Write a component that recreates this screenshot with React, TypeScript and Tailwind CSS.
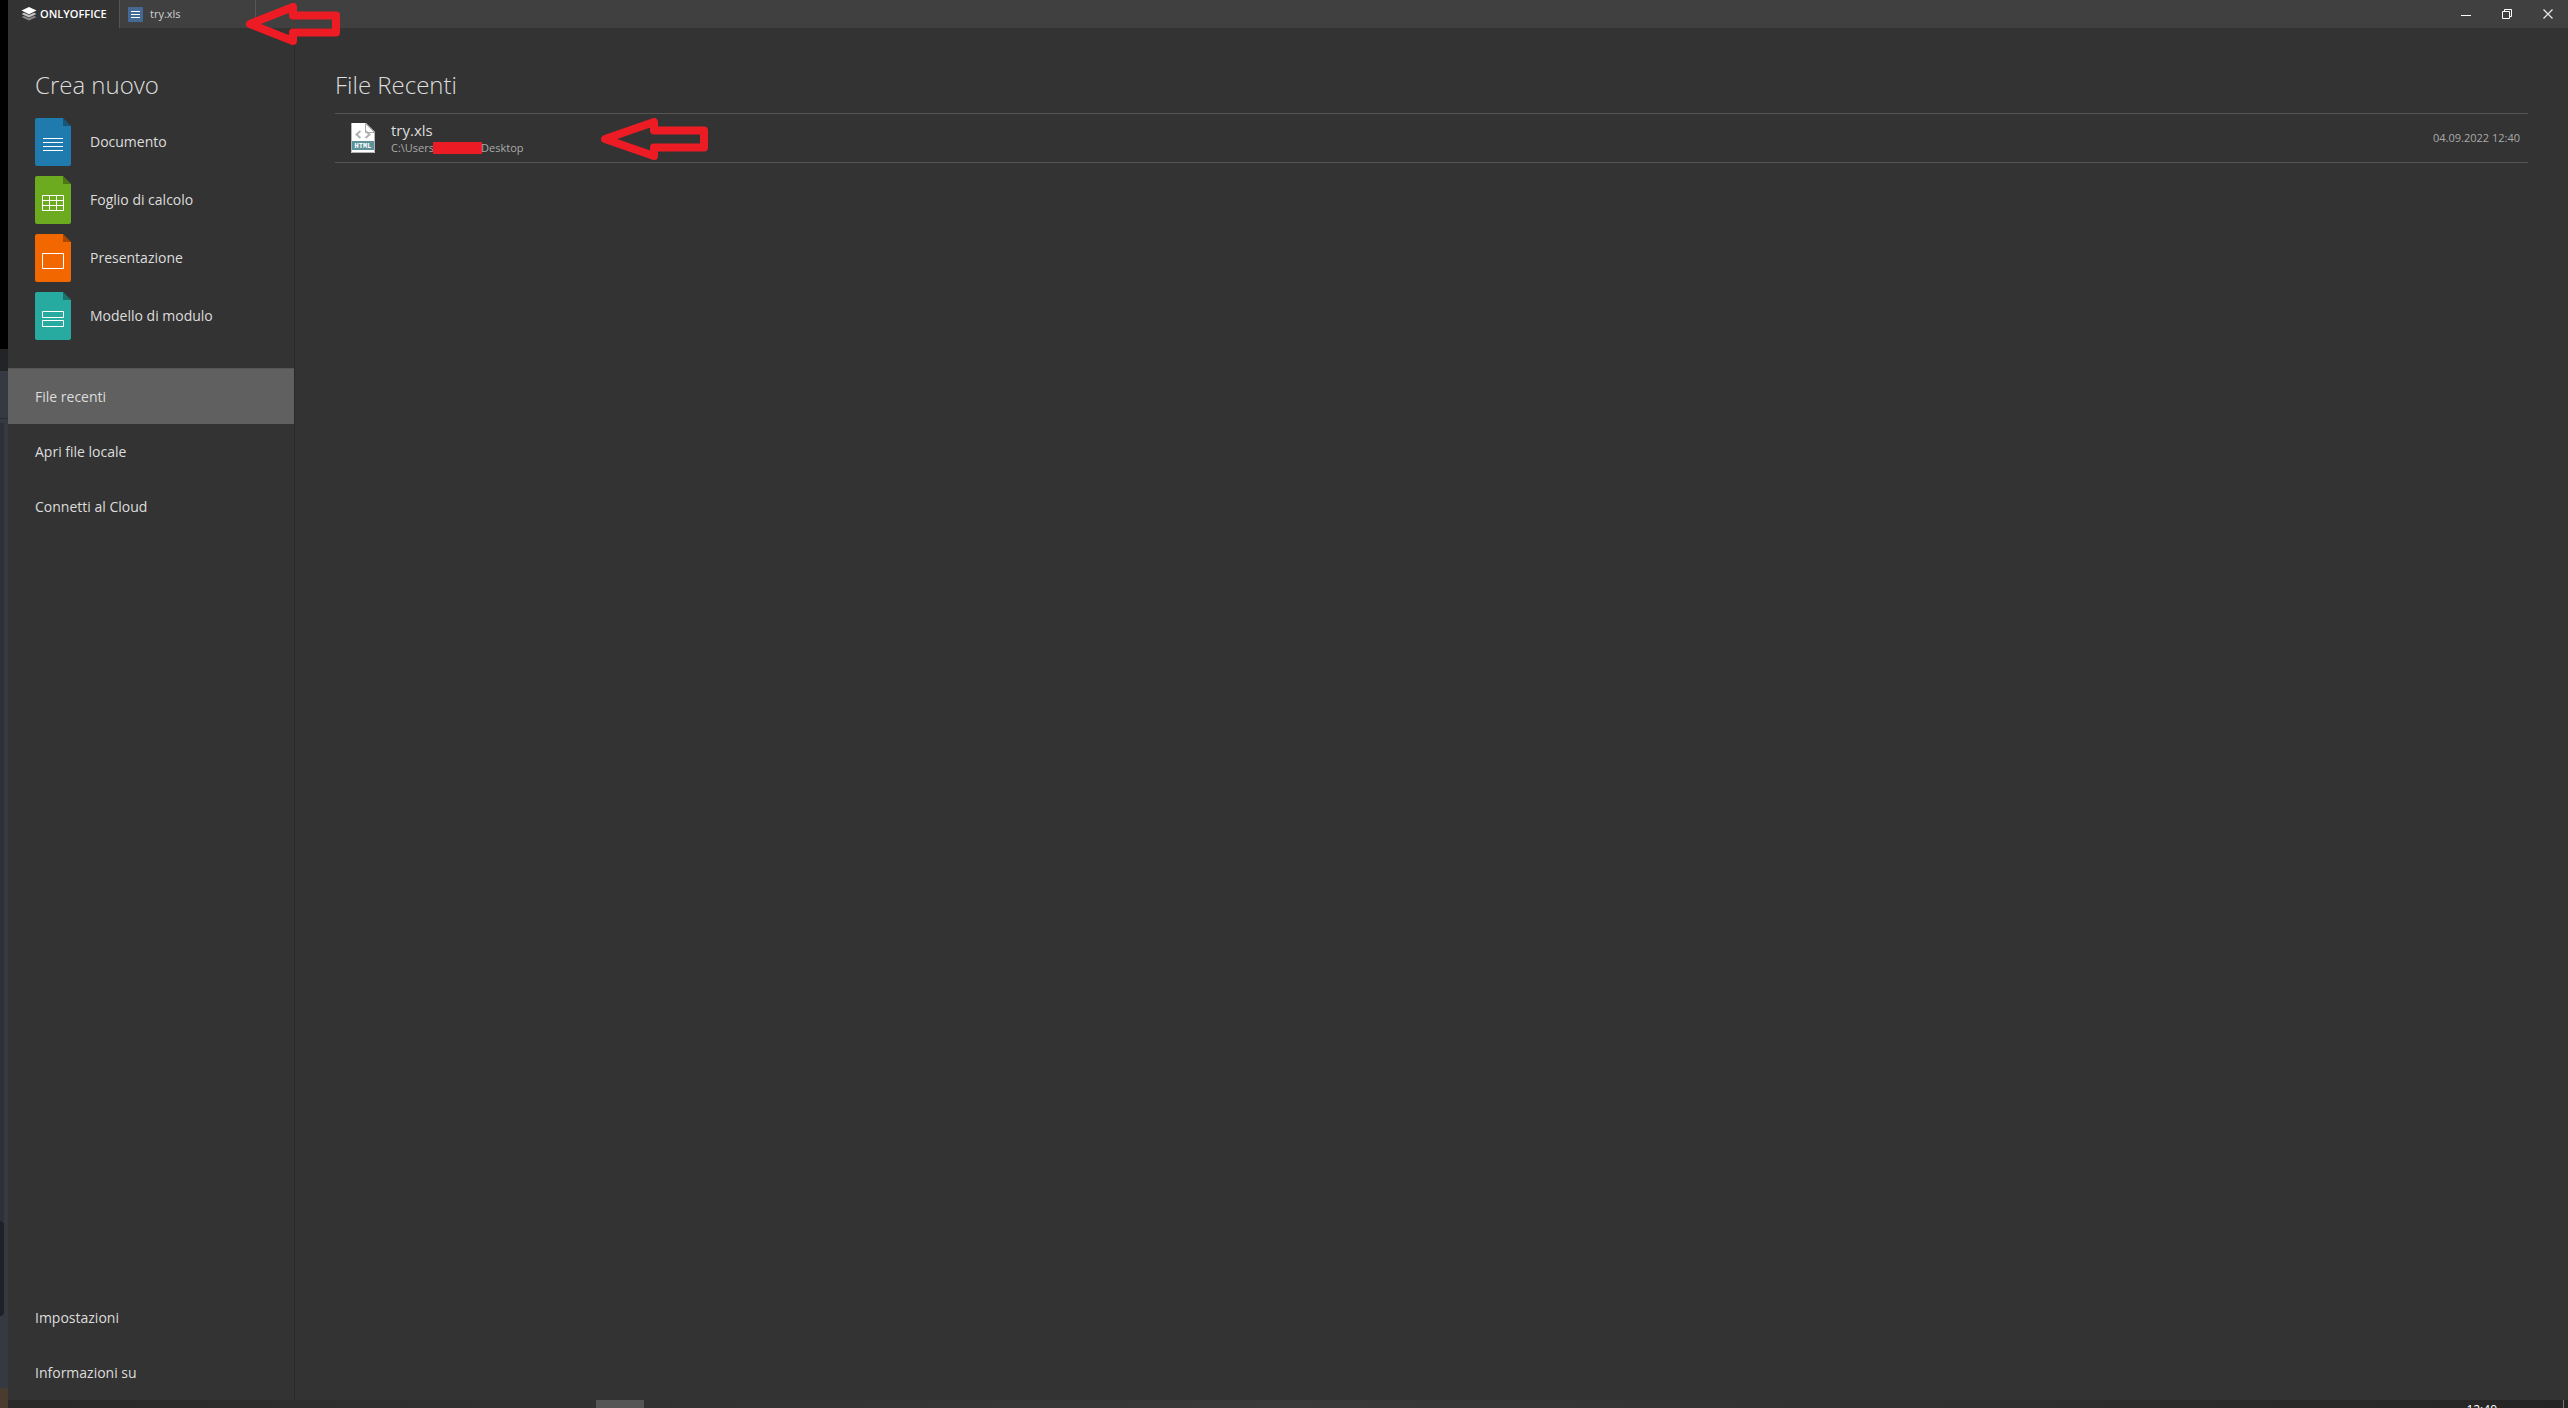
import type { ReactNode } from 'react';

type CreateItem = {
  label: string;
  color: string;
  glyph: ReactNode;
};

const createItems: CreateItem[] = [
  {
    label: 'Documento',
    color: '#1f7bae',
    glyph: <path d="M8 20.5h20M8 24.5h20M8 28.5h20M8 32.5h20" />,
  },
  {
    label: 'Foglio di calcolo',
    color: '#6cab1f',
    glyph: (
      <path d="M7.5 19.5h21v15h-21zM7.5 24.5h21M7.5 29.5h21M14.5 19.5v15M21.5 19.5v15" />
    ),
  },
  {
    label: 'Presentazione',
    color: '#f36700',
    glyph: <path d="M7.5 19.5h21v15h-21z" />,
  },
  {
    label: 'Modello di modulo',
    color: '#27aaa0',
    glyph: <path d="M7.5 19.5h21v6h-21zM7.5 28.5h21v6h-21z" />,
  },
];

function Logo() {
  return (
    <svg width="16" height="14" viewBox="0 0 16 14" aria-hidden="true">
      <path d="M0.5 10 3 8.9l5 2.3 5-2.3 2.5 1.1L8 13.6z" fill="#8a8a8a" />
      <path d="M0.5 6.9 3 5.8l5 2.3 5-2.3 2.5 1.1L8 10.4z" fill="#c4c4c4" />
      <path d="M8 0l7.5 3.6L8 7.2 0.5 3.6z" fill="#fff" />
    </svg>
  );
}

function FileIcon({ color, glyph }: { color: string; glyph: ReactNode }) {
  return (
    <svg width="36" height="48" viewBox="0 0 36 48" aria-hidden="true">
      <path d="M2 0h26l8 8v38a2 2 0 0 1-2 2H2a2 2 0 0 1-2-2V2a2 2 0 0 1 2-2z" fill={color} />
      <path d="M28 0l8 8h-8z" fill="#000" fillOpacity="0.3" />
      <g fill="none" stroke="#fff">
        {glyph}
      </g>
    </svg>
  );
}

function HtmlIcon() {
  return (
    <svg width="24" height="30" viewBox="0 0 24 30" aria-hidden="true">
      <path d="M0 0h15l9 9v21H0z" fill="#fff" />
      <path d="M0.5 0v29.5h23V9" fill="none" stroke="#b4b4b4" />
      <path d="M14.5 0.5v9h9z" fill="#fff" stroke="#a8a8a8" />
      <path d="M9.5 8 5.5 11.5l4 3.500M14.5 8l4 3.500-4 3.500" fill="none" stroke="#b0b0b0" strokeWidth="2" />
      <rect x="1" y="18" width="22" height="9" fill="#5d929b" />
      <text
        x="12"
        y="25"
        fill="#fff"
        fontSize="7"
        fontWeight="700"
        textAnchor="middle"
        fontFamily="'Liberation Mono', monospace"
      >
        HTML
      </text>
    </svg>
  );
}

type ArrowProps = {
  width: number;
  head: number;
  className: string;
};

function Arrow({ width, head, className }: ArrowProps) {
  return (
    <svg
      width={width}
      height="42"
      viewBox={`0 0 ${width} 42`}
      className={`pointer-events-none absolute ${className}`}
      aria-hidden="true"
    >
      <path
        d={`M4 21 ${head} 4v8.5H${width - 4}v17H${head}V38z`}
        fill="none"
        stroke="#ed1c24"
        strokeWidth="8"
        strokeLinejoin="round"
      />
    </svg>
  );
}

function TitleBar() {
  return (
    <header className="flex h-7 items-stretch bg-[#404040]">
      <button className="flex w-[111px] items-center gap-[3px] bg-[#333] pl-[13px] text-[11px] font-semibold text-white">
        <Logo />
        ONLYOFFICE
      </button>
      <div className="relative flex w-[137px] border-x border-[#555]">
        <button className="flex flex-1 items-center gap-[7px] pl-2 text-[11px] text-[#d0d0d0]">
          <svg width="15" height="15" viewBox="0 0 15 15" aria-hidden="true">
            <rect width="15" height="15" rx="1" fill="#446995" />
            <path d="M3 4.5h9M3 7.5h9M3 10.5h9" stroke="#fff" />
          </svg>
          try.xls
        </button>
        <Arrow width={94} head={47} className="top-[3px] left-[126px]" />
      </div>
      <div className="ml-auto flex">
        <button aria-label="Riduci a icona" className="flex w-[41px] items-center justify-center">
          <svg width="10" height="10" viewBox="0 0 10 10">
            <path d="M0 6.5h10" stroke="#fff" />
          </svg>
        </button>
        <button aria-label="Ripristina" className="flex w-[41px] items-center justify-center">
          <svg width="10" height="10" viewBox="0 0 10 10" fill="none" stroke="#fff">
            <path d="M0.5 2.5h7v7h-7zM2.5 2.5v-2h7v7h-2" />
          </svg>
        </button>
        <button aria-label="Chiudi" className="flex w-[41px] items-center justify-center">
          <svg width="10" height="10" viewBox="0 0 10 10">
            <path d="M0.5 0.5l9 9M9.5 0.5l-9 9" stroke="#e4e4e4" strokeWidth="1.3" />
          </svg>
        </button>
      </div>
    </header>
  );
}

function NavItem({ label, active = false }: { label: string; active?: boolean }) {
  return (
    <button
      className={`flex h-[55px] w-full items-center pl-[27px] text-left ${active ? 'bg-[#606060]' : ''}`}
    >
      {label}
    </button>
  );
}

function Sidebar() {
  return (
    <aside className="flex w-[287px] shrink-0 flex-col border-r border-[#292929] pt-[39px] text-sm text-[#ddd]">
      <h2 className="pl-[27px] text-2xl leading-9 font-light">Crea nuovo</h2>
      <div className="flex flex-col gap-2.5 pt-[15px] pl-[27px]">
        {createItems.map((item) => (
          <button key={item.label} className="flex items-center gap-[19px] text-left">
            <FileIcon color={item.color} glyph={item.glyph} />
            {item.label}
          </button>
        ))}
      </div>
      <nav className="mt-7 border-t border-[#555]">
        <NavItem label="File recenti" active />
        <NavItem label="Apri file locale" />
        <NavItem label="Connetti al Cloud" />
      </nav>
      <div className="mt-auto">
        <NavItem label="Impostazioni" />
        <NavItem label="Informazioni su" />
      </div>
    </aside>
  );
}

function RecentFiles() {
  return (
    <main className="min-w-0 flex-1 px-10 pt-[39px] text-[#ddd]">
      <h2 className="text-2xl leading-9 font-light">File Recenti</h2>
      <div className="relative mt-2.5">
        <button className="flex h-[50px] w-full items-center border-y border-[#555] pr-2 pl-4 text-left">
          <HtmlIcon />
          <span className="ml-4 flex flex-col">
            <span className="text-[15px] leading-5">try.xls</span>
            <span className="flex items-center text-[11px] leading-4 text-[#aaa]">
              C:\Users
              <span className="-mx-px h-3 w-[49px] bg-[#ed1c24]" />
              Desktop
            </span>
          </span>
          <time className="ml-auto text-[11px] text-[#aaa]">04.09.2022 12:40</time>
        </button>
        <Arrow width={107} head={53} className="top-[5px] left-[266px]" />
      </div>
    </main>
  );
}

// Strip of the desktop visible to the left of the window
function DesktopEdge() {
  return (
    <div className="flex w-2 shrink-0 flex-col bg-[#353941]">
      <div className="h-[349px] bg-black" />
      <div className="h-[22px] bg-[#232427]" />
      <div className="h-12 border-b border-[#292c33]" />
      <div className="mt-1 w-1 flex-1 bg-[#2d3038]" />
      <div className="h-[95px] w-1 rounded-r-sm bg-[#202126]" />
      <div className="h-[72px]" />
      <div className="h-5 bg-[#493b2e]" />
    </div>
  );
}

function Taskbar() {
  return (
    <div className="flex h-2 shrink-0 overflow-hidden bg-linear-to-r from-[#292929] via-[#3a3a3a] to-[#252525]">
      <div className="ml-[588px] w-12 bg-[#555]" />
      <time className="mt-0.5 mr-[70px] ml-auto text-xs leading-4 text-white">12:40</time>
      <div className="-ml-1 mr-1 w-px bg-[#777]" />
    </div>
  );
}

export default function App() {
  return (
    <div className="flex min-h-screen bg-[#333] font-['Open_Sans','Noto_Sans',sans-serif]">
      <DesktopEdge />
      <div className="flex min-w-0 flex-1 flex-col">
        <TitleBar />
        <div className="flex flex-1">
          <Sidebar />
          <RecentFiles />
        </div>
        <Taskbar />
      </div>
    </div>
  );
}
